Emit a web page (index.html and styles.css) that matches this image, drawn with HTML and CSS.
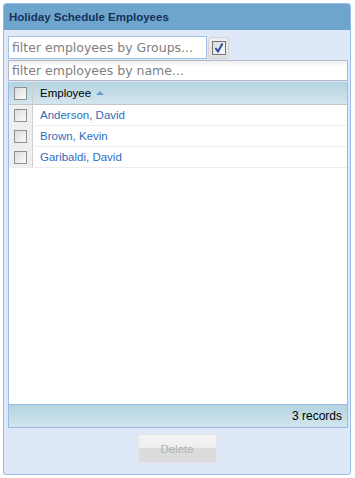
FILE: index.html
```html
<!DOCTYPE html>
<html>
  <head>
    <meta charset="UTF-8" />
    <title>Holiday Schedule Employees</title>
    <link rel="stylesheet" href="styles.css">
  </head>
  <body>
    <div class="panel">
      <div class="panel-head">Holiday Schedule Employees</div>
      <div class="panel-body">
        <div class="group-row">
          <input class="group-filter" type="text" placeholder="filter employees by Groups..." />
          <button class="group-toggle">
            <svg width="16" height="16" viewBox="0 0 16 16">
              <defs>
                <linearGradient id="boxfill" x1="0" y1="0" x2="1" y2="1">
                  <stop offset="0" stop-color="#d8d8d8" />
                  <stop offset="1" stop-color="#fafafa" />
                </linearGradient>
              </defs>
              <rect x="1.5" y="1.5" width="13" height="13" fill="url(#boxfill)" stroke="#767676" />
              <path d="M4.5 8 L7 11.5 L11.5 3.5" fill="none" stroke="#2d4b9c" stroke-width="2" />
            </svg>
          </button>
        </div>
        <input class="name-filter" type="text" placeholder="filter employees by name..." />

        <div class="grid">
          <div class="grid-head">
            <div class="chk-cell"><span class="chk"></span></div>
            <div class="name-cell">Employee <span class="sort-up"></span></div>
          </div>
          <div class="grid-rows">
            <div class="grid-row">
              <div class="chk-cell"><span class="chk"></span></div>
              <div class="name-cell"><a href="#">Anderson, David</a></div>
            </div>
            <div class="grid-row">
              <div class="chk-cell"><span class="chk"></span></div>
              <div class="name-cell"><a href="#">Brown, Kevin</a></div>
            </div>
            <div class="grid-row">
              <div class="chk-cell"><span class="chk"></span></div>
              <div class="name-cell"><a href="#">Garibaldi, David</a></div>
            </div>
          </div>
          <div class="grid-foot">3 records</div>
        </div>

        <div class="actions">
          <button class="delete-btn" disabled>Delete</button>
        </div>
      </div>
    </div>
  </body>
</html>
```

FILE: styles.css
```css
body {
  margin: 0;
  padding: 3px;
  font-family: "Liberation Sans", Arial, sans-serif;
  background: #ffffff;
}

.panel {
  width: 348px;
  height: 472px;
  border: 1px solid #99bbe8;
  border-radius: 3px;
  background: #dfe8f6;
  display: flex;
  flex-direction: column;
  box-sizing: border-box;
  overflow: hidden;
}

.panel-head {
  height: 26px;
  background: #6ea5cc;
  color: #15305a;
  font-weight: bold;
  font-size: 11.5px;
  line-height: 26px;
  padding-left: 5px;
  flex-shrink: 0;
}

.panel-body {
  flex: 1;
  padding: 6px 4px 0 4px;
  display: flex;
  flex-direction: column;
}

.group-row {
  display: flex;
  align-items: center;
  height: 23px;
}

.group-filter {
  width: 199px;
  height: 23px;
  box-sizing: border-box;
  border: 1px solid #a3c2ea;
  background: #ffffff;
  padding: 0 3px;
  margin: 0;
  font-family: "DejaVu Sans", Verdana, sans-serif;
  font-size: 12.5px;
  outline: none;
}

.group-filter::placeholder,
.name-filter::placeholder {
  color: #808080;
}

.group-toggle {
  width: 21px;
  height: 22px;
  margin-left: 1px;
  padding: 0;
  border: 1px solid #d4d4d4;
  border-radius: 3px;
  background: linear-gradient(#eeeeee, #e0e0e0);
  display: flex;
  align-items: center;
  justify-content: center;
}

.name-filter {
  width: 340px;
  height: 21px;
  margin: 1px 0 0 0;
  box-sizing: border-box;
  border: 1px solid #b5b8c8;
  background: linear-gradient(#f0f0f0, #ffffff 30%, #ffffff);
  padding: 0 3px;
  font-family: "DejaVu Sans", Verdana, sans-serif;
  font-size: 12.5px;
  outline: none;
}

.grid {
  width: 340px;
  height: 346px;
  margin-top: 1px;
  border: 1px solid #99bbe8;
  border-top: none;
  box-sizing: border-box;
  background: #ffffff;
  display: flex;
  flex-direction: column;
}

.grid-head {
  height: 22px;
  display: flex;
  background: linear-gradient(#b3d4e0, #d3e6ee);
  border-bottom: 1px solid #c6c6c6;
  font-size: 11.5px;
  color: #000000;
}

.chk-cell {
  width: 23px;
  border-right: 1px solid #d0d0d0;
  display: flex;
  align-items: center;
  justify-content: center;
  flex-shrink: 0;
}

.grid-rows .chk-cell {
  background: #efefef;
}

.chk {
  width: 11px;
  height: 11px;
  border: 1px solid #8e8f8f;
  background: linear-gradient(135deg, #dcdcdc, #fbfbfb);
  display: inline-block;
}

.name-cell {
  display: flex;
  align-items: center;
  padding-left: 7px;
}

.sort-up {
  width: 0;
  height: 0;
  border-left: 4px solid transparent;
  border-right: 4px solid transparent;
  border-bottom: 4px solid #6a9fd6;
  margin-left: 5px;
}

.grid-rows {
  flex: 1;
}

.grid-row {
  height: 20px;
  display: flex;
  border-bottom: 1px solid #ededed;
  font-size: 11.5px;
}

.grid-row a {
  color: #2f6ebc;
  text-decoration: none;
}

.grid-foot {
  height: 22px;
  background: linear-gradient(#b3d4e0, #d3e6ee);
  border-top: 1px solid #99bbe8;
  text-align: right;
  font-size: 12px;
  line-height: 22px;
  padding-right: 5px;
  color: #000000;
}

.actions {
  display: flex;
  justify-content: center;
  padding-top: 6px;
}

.delete-btn {
  width: 79px;
  height: 29px;
  border: 1px solid #e4e4e4;
  border-radius: 3px;
  background: linear-gradient(#f4f4f4, #eeeeee 48%, #dcdcdc 50%, #dcdcdc);
  color: #b2b2b2;
  font-family: "Liberation Sans", Arial, sans-serif;
  font-size: 11.5px;
  padding: 0;
}
```
